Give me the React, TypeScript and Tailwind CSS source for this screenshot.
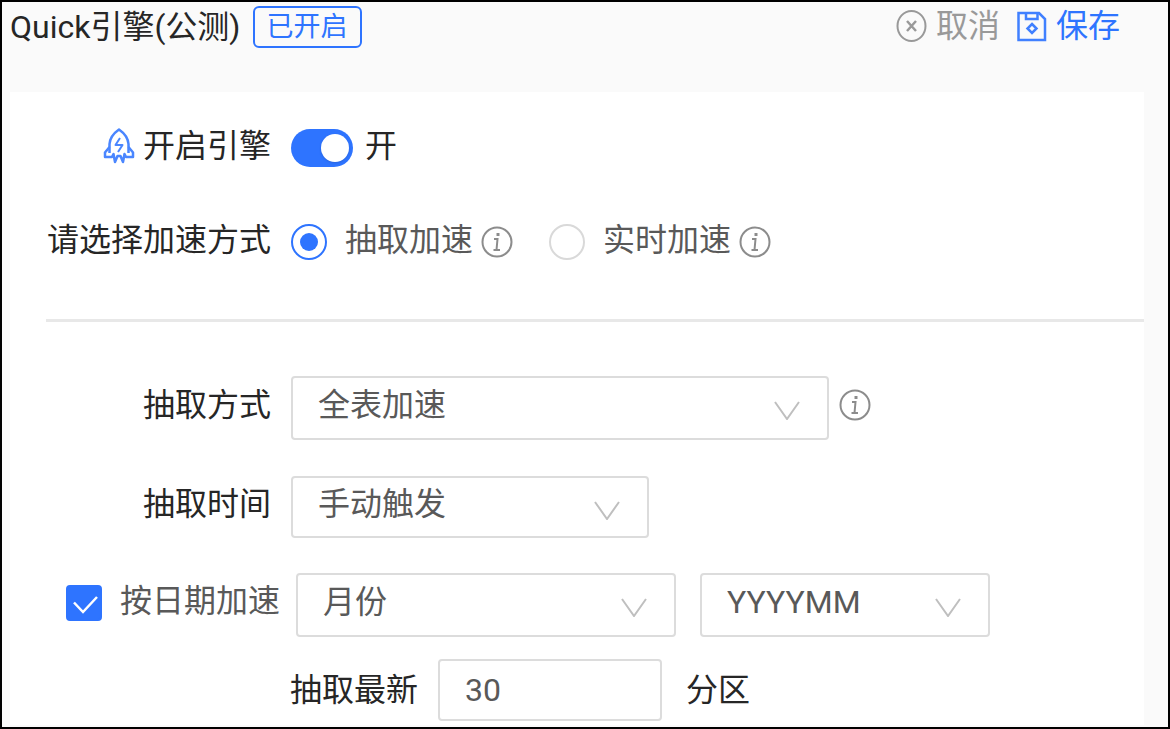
import React, { useState } from 'react';

const fontStack = "font-[Roboto,'Noto_Sans_CJK_SC',sans-serif]";

function RocketIcon() {
  return (
    <svg className="h-9 w-8 shrink-0" viewBox="0 0 32 36" fill="none" stroke="#4a86ff" strokeWidth="2.500" strokeLinejoin="round" aria-hidden="true">
      <path d="M6.500 25V16C7 10 11 5 16 1.500C21 5 25 10 25.500 16V25" />
      <path d="M6.500 19L2 24.500V29H9L10.500 26L12 34L14.500 28H17.500L20 34L21.500 26L23 29H30V24.500L25.500 19" />
      <path d="M17 10L12.500 17H19.500L15 24" strokeWidth="2" />
    </svg>
  );
}

function CancelIcon() {
  return (
    <svg className="size-8 shrink-0" viewBox="0 0 32 32" fill="none" stroke="#999" strokeWidth="2" aria-hidden="true">
      <ellipse cx="15.500" cy="16" rx="14" ry="15" />
      <path d="M11 11L20 21M20 11L11 21" strokeWidth="2.500" />
    </svg>
  );
}

function SaveIcon() {
  return (
    <svg className="size-8 shrink-0" viewBox="0 0 32 32" fill="none" stroke="#4080ff" strokeWidth="2.500" aria-hidden="true">
      <path d="M2.500 3H23L29 9V30H2.500Z" />
      <path d="M10 3V9H21.500V3" />
      <path d="M16 14L20.500 18.500L16 23L11.500 18.500Z" />
    </svg>
  );
}

function InfoButton({ label }: { label: string }) {
  return (
    <button type="button" aria-label={label} className="shrink-0">
      <svg className="size-8" viewBox="0 0 32 32" fill="none" stroke="#8c8c8c" strokeWidth="2" aria-hidden="true">
        <circle cx="16" cy="16" r="14.500" />
        <path d="M13 13H16.500L15.500 24M12.500 24H19" />
        <path d="M15.500 8.500H18.500" strokeWidth="3" />
      </svg>
    </button>
  );
}

interface SelectBoxProps {
  id: string;
  label?: string;
  options: string[];
  className: string;
}

function SelectBox({ id, label, options, className }: SelectBoxProps) {
  return (
    <div className={`relative shrink-0 ${className}`}>
      <select
        id={id}
        aria-label={label}
        className="size-full appearance-none rounded-sm border-2 border-[#dcdcdc] bg-white pb-1.5 pl-[25px] pr-16 text-[#595959] outline-none"
      >
        {options.map((option) => (
          <option key={option}>{option}</option>
        ))}
      </select>
      <svg className="pointer-events-none absolute right-7 top-6 h-5 w-7" viewBox="0 0 28 20" fill="none" stroke="#bfbfbf" strokeWidth="2" aria-hidden="true">
        <path d="M2 2L14 19L26 2" />
      </svg>
    </div>
  );
}

export default function App() {
  const [enabled, setEnabled] = useState(true);
  const [mode, setMode] = useState('extract');
  const [byDate, setByDate] = useState(true);

  const radioClass =
    'flex size-9 shrink-0 appearance-none items-center justify-center rounded-full border-2 border-[#d9d9d9] bg-white before:size-[18px] before:rounded-full checked:border-[#2e74ff] checked:before:bg-[#2e74ff]';

  return (
    <div className={`${fontStack} min-h-screen overflow-hidden border-2 border-black bg-[#fafafa] text-[32px] leading-10 text-[#262626]`}>
      {/* Header */}
      <header className="flex h-[90px] items-start justify-between pl-2 pr-12 pt-1">
        <div className="flex items-center gap-3">
          <h1>Quick引擎(公测)</h1>
          <span className="flex h-[42px] items-center rounded-md border-2 border-[#2e74ff] px-3 text-[27px] text-[#2e74ff]">已开启</span>
        </div>
        <div className="flex items-center gap-4">
          <button type="button" className="flex items-center gap-2 text-[#999]">
            <CancelIcon />
            取消
          </button>
          <button type="button" className="flex items-center gap-2 text-[#2e74ff]">
            <SaveIcon />
            保存
          </button>
        </div>
      </header>

      {/* Settings panel */}
      <main className="ml-2 mr-6 bg-white pb-1 pt-9">
        <div className="flex h-10 items-center gap-5">
          <div className="flex w-[261px] shrink-0 items-center justify-end gap-2 pb-1">
            <RocketIcon />
            <span id="engine-label">开启引擎</span>
          </div>
          <div className="flex items-center gap-3">
            <button
              type="button"
              role="switch"
              aria-checked={enabled}
              aria-labelledby="engine-label"
              onClick={() => setEnabled(!enabled)}
              className={`flex h-[38px] w-[62px] items-center rounded-full px-1 ${enabled ? 'justify-end bg-[#2e74ff]' : 'justify-start bg-[#bfbfbf]'}`}
            >
              <span className="size-7 rounded-full bg-white shadow-sm" />
            </button>
            <span className="pb-1">{enabled ? '开' : '关'}</span>
          </div>
        </div>

        <div role="radiogroup" aria-labelledby="mode-label" className="mt-[54px] flex h-10 items-center gap-5">
          <span id="mode-label" className="w-[261px] shrink-0 pb-1 text-right">请选择加速方式</span>
          <div className="flex items-center gap-9 text-[#595959]">
            <div className="flex items-center gap-2">
              <label className="flex items-center gap-[18px]">
                <input type="radio" name="mode" checked={mode === 'extract'} onChange={() => setMode('extract')} className={radioClass} />
                <span className="pb-1">抽取加速</span>
              </label>
              <InfoButton label="抽取加速说明" />
            </div>
            <div className="flex items-center gap-2">
              <label className="flex items-center gap-[18px]">
                <input type="radio" name="mode" checked={mode === 'realtime'} onChange={() => setMode('realtime')} className={radioClass} />
                <span className="pb-1">实时加速</span>
              </label>
              <InfoButton label="实时加速说明" />
            </div>
          </div>
        </div>

        <hr className="ml-9 mt-[57px] border-t-[3px] border-[#e8e8e8]" />

        {/* Extraction options */}
        <div className="mt-[54px] flex items-center gap-5">
          <label htmlFor="extract-mode" className="w-[261px] shrink-0 pb-1.5 text-right">抽取方式</label>
          <div className="flex items-center gap-2.5">
            <SelectBox id="extract-mode" options={['全表加速', '增量加速']} className="h-16 w-[538px]" />
            <div className="flex pb-1.5">
              <InfoButton label="抽取方式说明" />
            </div>
          </div>
        </div>

        <div className="mt-9 flex items-center gap-5">
          <label htmlFor="extract-time" className="w-[261px] shrink-0 pb-1.5 text-right">抽取时间</label>
          <SelectBox id="extract-time" options={['手动触发', '定时触发']} className="h-[62px] w-[358px]" />
        </div>

        <div className="mt-[35px] flex items-center">
          <label className="ml-14 flex w-[230px] shrink-0 items-center gap-[18px] pb-1 text-[#595959]">
            <span className="relative size-9 shrink-0">
              <input
                type="checkbox"
                checked={byDate}
                onChange={() => setByDate(!byDate)}
                className="block size-9 appearance-none rounded-sm border-2 border-[#d9d9d9] bg-white checked:border-[#2e74ff] checked:bg-[#2e74ff]"
              />
              <svg className="pointer-events-none absolute inset-0 size-9" viewBox="0 0 36 36" fill="none" stroke="#fff" strokeWidth="2.500" aria-hidden="true">
                <path d="M8 17.500L17 27L31 12" />
              </svg>
            </span>
            <span className="pb-1">按日期加速</span>
          </label>
          <div className="flex items-center gap-6">
            <SelectBox id="date-unit" label="日期单位" options={['月份', '日期']} className="h-16 w-[380px]" />
            <SelectBox id="date-format" label="日期格式" options={['YYYYMM', 'YYYY-MM']} className="h-16 w-[290px]" />
          </div>
        </div>

        <div className="ml-[280px] mt-[22px] flex items-center gap-5">
          <label htmlFor="latest">抽取最新</label>
          <input id="latest" type="text" defaultValue="30" className="h-[62px] w-[224px] rounded-sm border-2 border-[#dcdcdc] bg-white px-[25px] text-[#595959] outline-none" />
          <span className="pl-1">分区</span>
        </div>
      </main>
    </div>
  );
}
